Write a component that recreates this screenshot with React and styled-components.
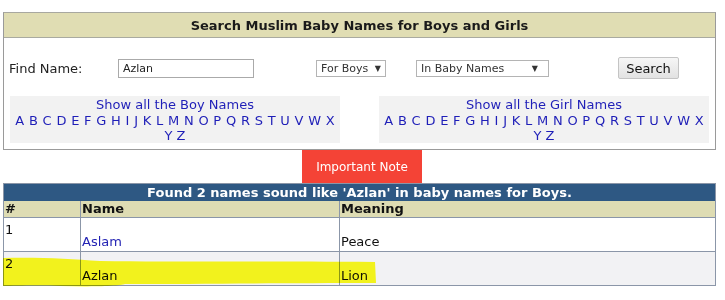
import React from 'react'
import styled, { createGlobalStyle } from 'styled-components'

const GlobalStyle = createGlobalStyle`
    body {
        margin: 0;
        background: #fff;
        font-family: Verdana, "DejaVu Sans", sans-serif;
        font-size: 13px;
        color: #111;
    }
`
const Page = styled.div`
    width: 725px;
    height: 300px;
    position: relative;
    overflow: hidden;
    padding: 12px 0 0 3px;
    box-sizing: border-box;
`
const SearchBox = styled.div`
    width: 713px;
    height: 138px;
    box-sizing: border-box;
    border: 1px solid #9a9a9a;
    border-top-color: #a8a8a0;
`
const BoxTitle = styled.div`
    height: 24px;
    background: #e0ddb3;
    border-bottom: 1px solid #a9aaa0;
    display: flex;
    align-items: center;
    justify-content: center;
    font-weight: bold;
    font-size: 13px;
    color: #1a1a1a;
`
const FormRow = styled.div`
    display: flex;
    align-items: center;
    height: 22px;
    margin-top: 19px;
    padding-left: 5px;
`
const Label = styled.span`
    width: 109px;
    font-size: 13px;
    color: #222;
`
const TextInput = styled.div`
    width: 136px;
    height: 19px;
    box-sizing: border-box;
    border: 1px solid #aaa;
    font-size: 11px;
    padding: 0 4px;
    display: flex;
    align-items: center;
    color: #222;
`
const Select = styled.div`
    width: ${({w}) => w}px;
    margin-left: ${({ml}) => ml}px;
    height: 17px;
    box-sizing: border-box;
    border: 1px solid #b4b4b4;
    font-size: 11px;
    padding: 0 4px;
    display: flex;
    align-items: center;
    justify-content: space-between;
    color: #333;
`
const Arrow = styled.span`
    font-size: 8px;
    margin-right: ${({mr}) => mr || 0}px;
`
const Button = styled.div`
    margin-left: 69px;
    width: 61px;
    height: 22px;
    box-sizing: border-box;
    border: 1px solid #c4c4c4;
    border-radius: 2px;
    background: linear-gradient(#f6f6f6, #e2e2e2);
    display: flex;
    align-items: center;
    justify-content: center;
    font-size: 13px;
    color: #111;
`
const LettersRow = styled.div`
    display: flex;
    justify-content: space-between;
    padding: 0 6px 0 6px;
    margin-top: 17px;
`
const LetterPanel = styled.div`
    width: 330px;
    height: 47px;
    background: #f2f2f2;
    text-align: center;
    color: #1f1fb8;
    font-size: 13px;
    line-height: 15.5px;
    padding-top: 1px;
    box-sizing: border-box;
`
const Letters = styled.div`
    white-space: nowrap;
    word-spacing: ${({wide}) => wide ? '0.6px' : '0'};
`
const NoteRow = styled.div`
    display: flex;
    justify-content: center;
    padding-right: 4px;
`
const NoteButton = styled.div`
    width: 120px;
    height: 33px;
    background: #f44336;
    color: #fff;
    font-size: 12px;
    display: flex;
    align-items: center;
    justify-content: center;
`
const Table = styled.table`
    width: 713px;
    border-collapse: collapse;
    font-size: 13px;
    border: 1px solid #8b96a8;
`
const Caption = styled.th`
    background: #2e5883;
    color: #fff;
    height: 17px;
    padding: 0;
    font-weight: bold;
    font-size: 13px;
    line-height: 17px;
    text-align: center;
`
const Head = styled.th`
    background: #dedcb3;
    height: 16px;
    padding: 0 0 0 1px;
    line-height: 16px;
    text-align: left;
    font-weight: bold;
    border-left: 1px solid #8b96a8;
    border-bottom: 1px solid #8b96a8;
    width: ${({w}) => w ? `${w}px` : 'auto'};
`
const Row = styled.tr`
    background: ${({alt}) => alt ? '#f2f2f4' : '#fff'};
    border-bottom: 1px solid #8b96a8;
`
const Cell = styled.td`
    height: 34px;
    box-sizing: border-box;
    padding: 0 0 0 1px;
    line-height: 16px;
    border-left: 1px solid #8b96a8;
    vertical-align: ${({top}) => top ? 'top' : 'bottom'};
    padding-top: ${({top}) => top ? '4px' : '0'};
    padding-bottom: ${({top}) => top ? '0' : '1px'};
    color: ${({link}) => link ? '#2424b4' : '#111'};
`
const Highlight = styled.svg`
    position: absolute;
    left: 0;
    top: 250px;
    mix-blend-mode: multiply;
    pointer-events: none;
`

const letters = 'A B C D E F G H I J K L M N O P Q R S T U V W X'

const App = () => {
    return (
        <>
        <GlobalStyle />
        <Page>
            <SearchBox>
                <BoxTitle>Search Muslim Baby Names for Boys and Girls</BoxTitle>
                <FormRow>
                    <Label>Find Name:</Label>
                    <TextInput>Azlan</TextInput>
                    <Select w={70} ml={62}>For Boys <Arrow>▼</Arrow></Select>
                    <Select w={133} ml={30}>In Baby Names <Arrow mr={6}>▼</Arrow></Select>
                    <Button>Search</Button>
                </FormRow>
                <LettersRow>
                    <LetterPanel>
                        <div>Show all the Boy Names</div>
                        <Letters wide>{letters}</Letters>
                        <Letters>Y Z</Letters>
                    </LetterPanel>
                    <LetterPanel>
                        <div>Show all the Girl Names</div>
                        <Letters wide>{letters}</Letters>
                        <Letters>Y Z</Letters>
                    </LetterPanel>
                </LettersRow>
            </SearchBox>
            <NoteRow>
                <NoteButton>Important Note</NoteButton>
            </NoteRow>
            <Table>
                <tbody>
                    <tr><Caption colSpan={3}>Found 2 names sound like 'Azlan' in baby names for Boys.</Caption></tr>
                    <tr>
                        <Head w={75}>#</Head>
                        <Head w={257}>Name</Head>
                        <Head>Meaning</Head>
                    </tr>
                    <Row>
                        <Cell top>1</Cell>
                        <Cell link>Aslam</Cell>
                        <Cell>Peace</Cell>
                    </Row>
                    <Row alt>
                        <Cell top>2</Cell>
                        <Cell>Azlan</Cell>
                        <Cell>Lion</Cell>
                    </Row>
                </tbody>
            </Table>
            <Highlight width="400" height="45" viewBox="0 0 400 45">
                <path d="M3 8 C40 7 70 9 100 11 C180 12 260 11 375 12 L376 33 C280 33 200 34 125 34 C120 36 90 37 60 36 C35 35 15 36 3 36 Z" fill="#ffff1e" />
            </Highlight>
        </Page>
        </>
    )
}

export default App
